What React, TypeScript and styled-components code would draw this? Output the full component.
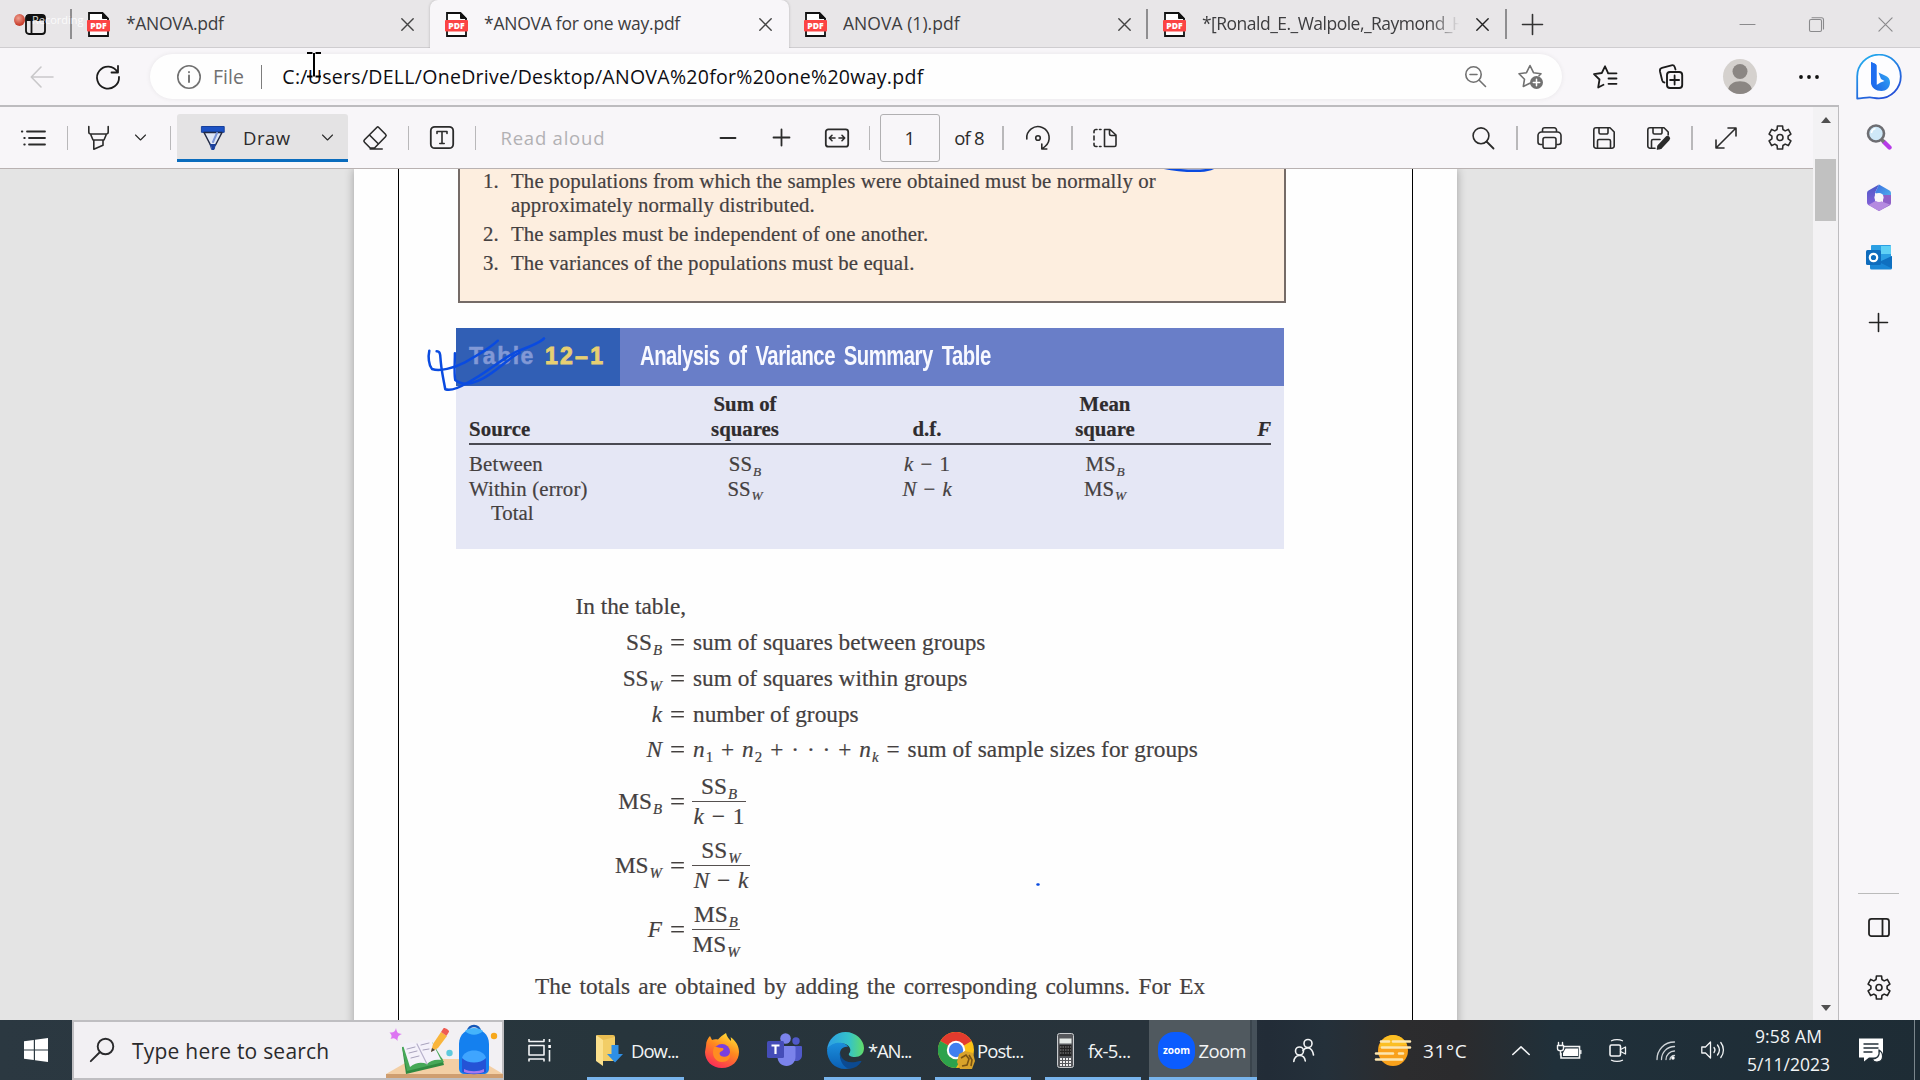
import React, { useLayoutEffect, useRef, useState } from 'react';
import styled, { createGlobalStyle } from 'styled-components';

const UI = `'Open Sans', 'Noto Sans', sans-serif`;
const BOOK = `'Liberation Serif', 'Times New Roman', serif`;

const Global = createGlobalStyle`
  * { box-sizing: border-box; }
  html, body { margin: 0; padding: 0; overflow: hidden; background: #f8f6f9; }
  body { font-family: ${UI}; }
`;

/* ---------- text that is set to a measure ---------- */

const FitSpan = styled.span`
  display: inline-block;
  white-space: pre;
  flex: none;
  justify-self: start;
`;

function Fit({ w, children, words }: { w: number; children: string; words?: boolean }) {
  const ref = useRef<HTMLSpanElement>(null);
  const [space, setSpace] = useState(0);
  useLayoutEffect(() => {
    if (!ref.current) return;
    const count = words ? children.split(' ').length - 1 : children.length - 1;
    const natural = ref.current.offsetWidth;
    if (count > 0) setSpace((w - natural) / count);
  }, []);
  return (
    <FitSpan ref={ref} style={words ? { wordSpacing: space } : { letterSpacing: space }}>
      {children}
    </FitSpan>
  );
}

/* ---------- shared pieces ---------- */

const Screen = styled.div`
  width: 1920px;
  height: 1080px;
  display: flex;
  flex-direction: column;
  background: #f8f6f9;
  overflow: hidden;
  position: relative;
`;

const Glyph = styled.svg<{ $ml?: number; $sw?: number }>`
  flex: none;
  display: block;
  overflow: visible;
  margin-left: ${(p) => p.$ml ?? 0}px;
  fill: none;
  stroke: currentColor;
  stroke-width: ${(p) => p.$sw ?? 1.6};
  stroke-linecap: round;
  stroke-linejoin: round;
`;

const Separator = styled.span<{ $ml?: number; $h?: number; $tone?: string }>`
  flex: none;
  width: 1.5px;
  height: ${(p) => p.$h ?? 24}px;
  margin-left: ${(p) => p.$ml ?? 0}px;
  margin-right: 0.5px;
  background: ${(p) => p.$tone ?? '#b9b8ba'};
`;

/* ---------- tab strip ---------- */

const TabStrip = styled.header`
  height: 48px;
  flex: none;
  display: flex;
  align-items: stretch;
  background: #e8e6e8;
  box-shadow: inset 0 -1px 0 #cfcdd0;
`;

const StripLead = styled.div`
  width: 72px;
  display: flex;
  align-items: center;
  color: #111;
  padding-left: 25px;
`;

const Tab = styled.div<{ $active?: boolean; $first?: boolean }>`
  width: ${(p) => (p.$first ? 358 : 359)}px;
  flex: none;
  display: flex;
  align-items: center;
  padding-left: 15px;
  border-radius: 8px 8px 0 0;
  background: ${(p) => (p.$active ? '#f8f6f9' : 'transparent')};
  box-shadow: ${(p) => (p.$active ? '0 0 3px rgba(0,0,0,.22)' : 'none')};
  clip-path: ${(p) => (p.$active ? 'inset(0 -4px 0 -4px)' : 'none')};
  color: #3d3d3f;
  font-size: 17.5px;
`;

const TabTitle = styled.div<{ $fade?: boolean }>`
  flex: 1;
  margin-left: 16px;
  margin-top: -2px;
  overflow: hidden;
  white-space: nowrap;
  mask-image: ${(p) => (p.$fade ? 'linear-gradient(90deg, #000 88%, transparent 99%)' : 'none')};
`;

const StripTools = styled.div`
  flex: 1;
  display: flex;
  align-items: center;
  color: #333;
`;

const FileBadge = () => (
  <Glyph width="23" height="25" viewBox="0 0 23 25">
    <path d="M2 1h13.5L21 6.5V24H2z" fill="#fff" stroke="#111" strokeWidth="1.8" strokeLinejoin="miter" />
    <path d="M15.5 1v5.500H21z" fill="#111" stroke="#111" strokeWidth="1" />
    <rect x="0" y="8" width="23" height="11.5" rx="1" fill="#fb4444" stroke="none" />
    <text x="11.5" y="16.9" textAnchor="middle" fontFamily="Open Sans, sans-serif" fontWeight="800" fontSize="8.6" fill="#fff" stroke="none">PDF</text>
  </Glyph>
);

const Cross = ({ ml, size = 13, tone = '#444', sw = 1.4 }: { ml?: number; size?: number; tone?: string; sw?: number }) => (
  <Glyph $ml={ml} $sw={sw} width={size} height={size} viewBox="0 0 13 13" color={tone}>
    <path d="M.8.8l11.4 11.4M12.2.8L.8 12.2" />
  </Glyph>
);

/* ---------- address row ---------- */

const Body = styled.div`
  height: 972px;
  flex: none;
  display: flex;
`;

const Main = styled.div`
  width: 1839px;
  flex: none;
  display: flex;
  flex-direction: column;
`;

const AddressRow = styled.div`
  height: 57px;
  flex: none;
  display: flex;
  align-items: center;
  color: #1b1b1b;
`;

const AddressBar = styled.div`
  width: 1412px;
  height: 45px;
  margin-left: 30px;
  flex: none;
  display: flex;
  align-items: center;
  border-radius: 23px;
  background: #fefefe;
  box-shadow: 0 0 5px rgba(0, 0, 0, 0.07);
  color: #717171;
  font-size: 19.5px;
`;

const Words = styled.span<{ $ml?: number; $tone?: string; $size?: number }>`
  flex: none;
  display: flex;
  line-height: 26px;
  margin-left: ${(p) => p.$ml ?? 0}px;
  color: ${(p) => p.$tone ?? 'inherit'};
  font-size: ${(p) => (p.$size ? `${p.$size}px` : 'inherit')};
`;

const Avatar = styled.div`
  width: 34px;
  height: 35px;
  margin-left: 40px;
  border-radius: 50%;
  background: #d5d1ce;
  overflow: hidden;
`;

/* ---------- PDF viewer ---------- */

const Frame = styled.div`
  flex: 1;
  display: flex;
  border-top: 2px solid #bdbcbf;
  border-right: 1.5px solid #bdbcbf;
`;

const Viewer = styled.div`
  width: 1813px;
  flex: none;
  display: flex;
  flex-direction: column;
`;

const PdfToolbar = styled.div`
  height: 62px;
  flex: none;
  display: flex;
  align-items: center;
  border-bottom: 1px solid #b9b2b2;
  color: #2b2b2b;
  font-size: 18.5px;
`;

const DrawButton = styled.div`
  width: 171px;
  height: 48px;
  margin-left: 5px;
  flex: none;
  display: flex;
  align-items: center;
  background: #e4e3e4;
  border-bottom: 3px solid #0a6cbd;
  border-radius: 3px 3px 0 0;
  padding: 3px 0 0 24px;
`;

const PageInput = styled.div`
  width: 60px;
  height: 48px;
  margin-left: 9px;
  flex: none;
  display: flex;
  align-items: center;
  justify-content: center;
  border: 1px solid #b1b0b2;
  border-radius: 3px;
`;

const Canvas = styled.div`
  height: 851px;
  overflow: hidden;
  background: #e4e4e4;
`;

const Page = styled.div`
  width: 1103px;
  height: 900px;
  margin-left: 354px;
  padding-left: 44px;
  background: #fefefe;
  box-shadow: 0 0 9px rgba(0, 0, 0, 0.3);
`;

const Sheet = styled.article`
  position: relative;
  width: 1015px;
  height: 100%;
  border-left: 1px solid #000;
  border-right: 1px solid #000;
  font-family: ${BOOK};
  color: #44403f;
  -webkit-text-stroke: 0.2px currentColor;
`;

const NoteBox = styled.section`
  width: 828px;
  height: 134px;
  margin-left: 59px;
  border: 2px solid #756b67;
  border-top: 0;
  background: #fdeedf;
  padding-left: 23px;
`;

const NoteItem = styled.div`
  display: grid;
  grid-template-columns: 28px 1fr;
  font-size: 20.8px;
  line-height: 24px;
  margin-bottom: 5.2px;
`;

const NoteLine = styled.div``;

const TableCard = styled.section`
  width: 828px;
  height: 221px;
  margin: 25px 0 0 57px;
  background: #e5e7f5;
`;

const TableBanner = styled.div`
  height: 58px;
  display: flex;
  background: #697ec8;
  font-family: 'Liberation Sans', Arial, sans-serif;
  font-weight: bold;
  line-height: 56px;
`;

const BannerTag = styled.div`
  width: 164px;
  padding-left: 13px;
  background: #315fb5;
  display: flex;
  font-size: 23px;
  color: #8299d6;
  -webkit-text-stroke: 0.5px currentColor;
`;

const BannerNumber = styled.span`
  margin-left: 10px;
  color: #e7cf72;
  -webkit-text-stroke: 0.9px currentColor;
`;

const BannerTitle = styled.div`
  padding-left: 20px;
  color: #f8f9ff;
  font-size: 27px;
  -webkit-text-stroke: 0;
`;

const Condensed = styled.span`
  display: inline-block;
  transform: scaleX(0.75);
  transform-origin: 0 50%;
  word-spacing: 5px;
`;

const TableGrid = styled.div<{ $head?: boolean }>`
  width: 802px;
  margin-left: 13px;
  display: grid;
  grid-template-columns: 186px 180px 184px 172px 80px;
  align-items: end;
  font-size: 20.8px;
  line-height: 25px;
  ${(p) =>
    p.$head
      ? `height: 59px; padding-bottom: 2px; border-bottom: 2px solid #4a4a52; font-weight: bold; color: #2f2c2e;`
      : `height: 24.7px;`}
`;

const Cell = styled.div<{ $align?: string; $indent?: number }>`
  text-align: ${(p) => p.$align ?? 'center'};
  padding-left: ${(p) => p.$indent ?? 0}px;
  white-space: pre;
`;

const TableRows = styled.div`
  padding-top: 6px;
`;

const Sub = styled.sub<{ $upright?: boolean }>`
  font-size: 0.64em;
  font-style: ${(p) => (p.$upright ? 'normal' : 'italic')};
  vertical-align: baseline;
  position: relative;
  top: 0.36em;
  margin-left: 1px;
  line-height: 0;
`;

const Expression = styled.span<{ $gap?: number }>`
  word-spacing: ${(p) => p.$gap ?? 2}px;
`;

const Prose = styled.div`
  margin-top: 39px;
  font-size: 23.3px;
`;

const Lead = styled.div`
  padding-left: 176.5px;
  height: 36px;
  line-height: 36px;
`;

const Definition = styled.div<{ $h?: number }>`
  display: grid;
  grid-template-columns: 263px 31px 1fr;
  height: ${(p) => p.$h ?? 36}px;
  line-height: 36px;
`;

const Left = styled.div`
  text-align: right;
`;

const Equals = styled.div`
  text-align: center;
  transform: scaleX(1.15);
`;

const Formula = styled(Definition)`
  height: 64px;
  align-items: center;
  & > ${Left}, & > ${Equals} {
    padding-bottom: 3px;
  }
`;

const FormulaGroup = styled.div`
  padding-top: 3px;
`;

const Fraction = styled.div<{ $w: number }>`
  width: ${(p) => p.$w}px;
  margin-left: -1px;
  text-align: center;
  white-space: nowrap;
  line-height: 28px;
`;

const Numerator = styled.div`
  height: 30px;
  border-bottom: 1.5px solid #55504f;
`;

const Denominator = styled.div`
  height: 30px;
  display: flex;
  justify-content: center;
`;

const Closing = styled.div`
  margin: 6px 0 0 136px;
  white-space: nowrap;
  line-height: 36px;
`;

const Ink = styled.svg<{ $x: number; $y: number }>`
  position: absolute;
  left: ${(p) => p.$x}px;
  top: ${(p) => p.$y}px;
  fill: none;
  stroke: #0a4be0;
  stroke-linecap: round;
  stroke-linejoin: round;
`;

const ScrollTrack = styled.div`
  flex: 1;
  display: flex;
  flex-direction: column;
  align-items: center;
  background: #f3f2f4;
`;

const Arrow = styled.span<{ $down?: boolean }>`
  width: 0;
  height: 0;
  border: 5.5px solid transparent;
  ${(p) =>
    p.$down
      ? 'border-top: 6px solid #505050; border-bottom: 0; margin: auto 0 9px;'
      : 'border-bottom: 6px solid #505050; border-top: 0; margin: 10px 0 36px;'}
`;

const Thumb = styled.span`
  width: 21px;
  height: 62px;
  background: #c1c1c1;
`;

/* ---------- sidebar ---------- */

const Sidebar = styled.aside`
  flex: 1;
  display: flex;
  flex-direction: column;
  align-items: center;
  color: #222;
  padding: 5px 2px 0 0;
`;

const SideSlot = styled.div<{ $mt: number; $h: number }>`
  height: ${(p) => p.$h}px;
  margin-top: ${(p) => p.$mt}px;
  display: flex;
  align-items: center;
`;

const SideRule = styled.hr`
  width: 41px;
  border: 0;
  height: 1px;
  background: #bbb;
  margin: 561px 0 0;
`;

/* ---------- taskbar ---------- */

const Taskbar = styled.footer`
  height: 60px;
  flex: none;
  display: flex;
  align-items: center;
  color: #f2f4f5;
  font-size: 18.5px;
  background: linear-gradient(90deg, #2b3841 0%, #27353c 32%, #28333b 60%, #222c37 66%, #24303a 69%, #2c2c2e 73%, #2b2b2d 76%, #20303a 81%, #1e2c35 100%);
  & ${Words} {
    padding-top: 2px;
  }
`;

const SearchBox = styled.div`
  width: 432px;
  height: 60px;
  margin-left: 24px;
  flex: none;
  display: flex;
  align-items: center;
  background: #f2f0f3;
  border: 2px solid #bfbec1;
  color: #2a2a2c;
`;

const AppButton = styled.div<{ $ml: number; $w: number; $pad: number; $current?: boolean }>`
  width: ${(p) => p.$w}px;
  height: 60px;
  margin-left: ${(p) => p.$ml}px;
  padding-left: ${(p) => p.$pad}px;
  flex: none;
  display: flex;
  align-items: center;
  border-bottom: 3px solid #78b4ec;
  padding-top: 3px;
  background: ${(p) =>
    p.$current ? 'linear-gradient(90deg, #50595f 0 101px, #3a444c 101px 103px, #46515a 103px)' : 'transparent'};
`;

const Clock = styled.div`
  width: 84px;
  margin-left: 23px;
  flex: none;
  text-align: center;
  line-height: 28.5px;
  font-size: 17.5px;
`;

/* ---------- overlays ---------- */

const Recording = styled.div`
  position: absolute;
  left: 14px;
  top: 13px;
  display: flex;
  align-items: center;
  gap: 7px;
  font-size: 11px;
  line-height: 14px;
  color: rgba(255, 255, 255, 0.85);
`;

const RecordDot = styled.span`
  width: 11px;
  height: 12px;
  border-radius: 50%;
  background: radial-gradient(circle at 40% 35%, #f0a090, #c8402f 65%);
`;

const Caret = styled.svg`
  position: absolute;
  left: 306px;
  top: 51px;
  stroke: #000;
  stroke-width: 2;
  fill: none;
`;

/* ---------- drawings ---------- */

const gearPath = (() => {
  const pts: string[] = [];
  for (let i = 0; i < 6; i++) {
    const mid = i * 60 - 90;
    for (const [off, r] of [[-21, 8.2], [-13, 11.4], [13, 11.4], [21, 8.2]]) {
      const a = ((mid + off) * Math.PI) / 180;
      pts.push(`${(12 + r * Math.cos(a)).toFixed(2)} ${(12.5 + r * 1.04 * Math.sin(a)).toFixed(2)}`);
    }
  }
  return `M${pts.join('L')}Z`;
})();

const Gear = ({ ml }: { ml?: number }) => (
  <Glyph $ml={ml} width="24" height="25" viewBox="0 0 24 25">
    <path d={gearPath} />
    <circle cx="12" cy="12.5" r="3" />
  </Glyph>
);

const Chevron = ({ ml }: { ml: number }) => (
  <Glyph $ml={ml} $sw={1.1} width="11" height="7" viewBox="0 0 11 7">
    <path d="M.5 1l5 5 5-5" />
  </Glyph>
);

const Bing = () => (
  <svg width="46" height="46" viewBox="0 0 46 46">
    <defs>
      <linearGradient id="bg1" x1="0" y1="0" x2=".6" y2="1">
        <stop offset="0" stopColor="#23b5f0" />
        <stop offset="1" stopColor="#2451d8" />
      </linearGradient>
      <linearGradient id="bg2" x1="0" y1="1" x2="1" y2="0">
        <stop offset="0" stopColor="#1b5fe0" />
        <stop offset=".55" stopColor="#2a8cf0" />
        <stop offset="1" stopColor="#35c8f0" />
      </linearGradient>
    </defs>
    <path d="M1.2 44.5V23A21.8 21.8 0 1 1 23 44.3c-4 0-6-.8-9-.9-4-.2-8 1-12.800 1.100z" fill="#fdfdff" stroke="url(#bg1)" strokeWidth="1.8" strokeLinejoin="round" />
    <path d="M15 8l4 1.800c1 .5 1.500 1.200 1.500 2.200V31l4 -2.500 4-1.500-3.500-2-2.500-6.500 6.500 3c3.500 1.500 5 3.500 5 7 0 5-4 8.500-8.500 8.500-5.500 0-10.500-3-10.500-9z" fill="url(#bg2)" />
    <path d="M15 8l4 1.800c1 .5 1.500 1.200 1.500 2.200V32c-3 1-5.500-1-5.500-4z" fill="#1d6df0" />
  </svg>
);

const Magnifier3D = () => (
  <svg width="26" height="26" viewBox="0 0 26 26">
    <path d="M18 18l5.500 5.500" stroke="#b73be8" strokeWidth="4.4" strokeLinecap="round" />
    <path d="M15.5 15.5l2.500 2.500" stroke="#777" strokeWidth="3.5" />
    <circle cx="10" cy="9.5" r="8" fill="#cfe8f8" stroke="#6d6d72" strokeWidth="2.6" />
    <path d="M5.5 9a5 5 0 0 1 4-4.500" stroke="#fff" strokeWidth="1.5" fill="none" />
  </svg>
);

const M365 = () => (
  <svg width="26" height="27" viewBox="0 0 26 27">
    <defs>
      <linearGradient id="m1" x1="0" y1="0" x2="0" y2="1"><stop offset="0" stopColor="#4a58c8" /><stop offset="1" stopColor="#8a62d8" /></linearGradient>
      <linearGradient id="m2" x1="0" y1="0" x2="1" y2="1"><stop offset="0" stopColor="#3a6be0" /><stop offset="1" stopColor="#52b8ee" /></linearGradient>
    </defs>
    <path d="M13 .5L2.500 6.500A3 3 0 0 0 1 9v9.500a3 3 0 0 0 1.500 2.600L8 24l1-5.500V9z" fill="url(#m1)" />
    <path d="M13 .5l10.500 6A3 3 0 0 1 25 9v7l-7.500-4.500L9 9z" fill="url(#m2)" />
    <path d="M25 11v8a3 3 0 0 1-1.500 2.600L13 27l-6-3.500L17 18v-7z" fill="#9060c8" />
    <path d="M2.500 21L12 15.500l5 2.500 7 2.500L14.500 26.200a3 3 0 0 1-3 0z" fill="#b58ae0" />
    <circle cx="13" cy="13.500" r="4.600" fill="#f8f6f9" />
  </svg>
);

const Outlook = () => (
  <svg width="26" height="25" viewBox="0 0 26 25">
    <rect x="5" y="0" width="20" height="16" rx="1" fill="#2b9fe3" />
    <rect x="15" y="1" width="10" height="8" fill="#5fd0f5" />
    <path d="M4 12l11 6 11-7v12a1.500 1.500 0 0 1-1.500 1.500h-19A1.500 1.500 0 0 1 4 23z" fill="#1a86d6" />
    <path d="M26 11v12.500L13 17z" fill="#0f6fc0" />
    <rect x="0" y="5" width="15" height="15" rx="1.500" fill="#0f6cbd" />
    <circle cx="7.500" cy="12.500" r="3.700" fill="none" stroke="#fff" strokeWidth="2.200" />
  </svg>
);

const DeskArt = () => (
  <Glyph $ml={57} width="117" height="56" viewBox="0 0 117 56">
    <g stroke="none">
      <path d="M0 52L26 37h66l25 15z" fill="#f3cfa5" />
      <path d="M0 52h117v4H0z" fill="#cf9e70" />
      <path d="M16 25l4 27 38-9-2-7z" fill="#2f8a40" />
      <path d="M16 25l30-5 12 20-37 9z" fill="#46a858" />
      <path d="M17 23c5-3 10-3 14-1 3-4 9-5 14-4l10 20c-6-1-11 1-14 4-5-2-11-2-17 3z" fill="#f4f1fa" />
      <path d="M31 22l10 20" stroke="#b9b2cc" strokeWidth="1.2" />
      <path d="M21 27l8-2M23 31l8-2M25 36l8-2M35 23l8-2M37 28l6-1" stroke="#a8a2bd" strokeWidth="1" />
      <path d="M45 30l2-8 8-12 6 4-9 12z" fill="#f9b53b" />
      <path d="M55 10l2.500-3.800c1-1 6 2 5.500 3.500l-2.500 4z" fill="#ef5b52" />
      <path d="M45 30l1-4 3 2z" fill="#444" />
      <path d="M10 6c1 5 2 5.500 6 6-4 1.500-4.500 3-4.500 7-2-3-4-3.500-7-2 2-3 1-4.500-1-6.500 4 .5 5.500-.5 6.500-4.500z" fill="#dd75f2" />
      <circle cx="63.5" cy="31" r="3.200" fill="#5ec9dd" />
      <circle cx="108" cy="14" r="3.200" fill="#f7a81c" />
      <path d="M82 10c0-8 12-8 12 0" stroke="#1557b8" strokeWidth="2.5" fill="none" />
      <path d="M73 22C73 2 103 2 103 22v24c0 4-2 6-6 6H79c-4 0-6-2-6-6z" fill="#1480ef" />
      <path d="M79 9c4-4 14-4 18 0-5 5-13 5-18 0z" fill="#45b4fb" />
      <path d="M76 50V38c0-12 24-12 24 0v12c-6 3-18 3-24 0z" fill="#2453d6" />
      <path d="M76 36c2-10 22-10 24 0-6 6-18 6-24 0z" fill="#3fa5ff" />
      <path d="M78 47c6 3 14 3 20 0v3c-6 2-14 2-20 0z" fill="#a678f0" />
    </g>
  </Glyph>
);

const Firefox = () => (
  <Glyph $ml={21} width="34" height="35" viewBox="0 0 34 35">
    <defs>
      <linearGradient id="ff" x1=".8" y1="0" x2=".3" y2="1"><stop offset="0" stopColor="#ffe73a" /><stop offset=".45" stopColor="#ff8a1f" /><stop offset="1" stopColor="#fb2a58" /></linearGradient>
    </defs>
    <g stroke="none">
      <path d="M1 13C1 8 3 5 5 3l2 4c2-1 4-1 6-.5C15 4 18 2 21 0c1 4 3 6 5 8 0-2 0-3-.5-4C31 8 34 13 34 19c0 9-7 16-17 16S0 28 0 19z" fill="url(#ff)" />
      <circle cx="17" cy="19" r="8" fill="#7a3fe0" />
      <path d="M9 14c3-1 4 1 8 1 2 0 2 2 0 3-3 1-3 3-1 5 4 2 8 0 9-3 1 6-3 9-8 9-7 0-11-7-8-15z" fill="#ff8c22" />
    </g>
  </Glyph>
);

const Teams = () => (
  <Glyph $ml={28} width="35" height="34" viewBox="0 0 35 34">
    <g stroke="none">
      <circle cx="29" cy="8" r="3.700" fill="#5059c9" />
      <circle cx="18.500" cy="5.500" r="5.300" fill="#7b83eb" />
      <path d="M24 13h10a1 1 0 0 1 1 1v8c0 4-3 6-6 6h-5z" fill="#5059c9" />
      <path d="M11 13h16a1.500 1.500 0 0 1 1.500 1.500V24c0 5-4 9-9 9s-9-4-9-9z" fill="#7b83eb" />
      <rect x="0" y="8" width="17" height="17" rx="1.500" fill="#454db8" />
      <path d="M4.500 12.500h8M8.500 12.500V21" stroke="#fff" strokeWidth="2.200" strokeLinecap="butt" />
    </g>
  </Glyph>
);

const Edge = () => (
  <svg width="37" height="37" viewBox="0 0 37 37">
    <defs>
      <linearGradient id="e1" x1="0" y1=".4" x2="1" y2=".4"><stop offset="0" stopColor="#2b9de6" /><stop offset=".6" stopColor="#35c3c8" /><stop offset="1" stopColor="#62dc68" /></linearGradient>
      <linearGradient id="e2" x1="0" y1="0" x2="0" y2="1"><stop offset="0" stopColor="#1b8fdc" /><stop offset="1" stopColor="#0b5fb4" /></linearGradient>
    </defs>
    <path d="M0 18C1 7 9 0 18.500 0 29 0 37 8 37 16c0 6-4 9-9 9-4 0-7-1.500-6-3.500 3-3 1-9-6-10C9 10.500 3 13 0 18z" fill="url(#e1)" />
    <path d="M0 18c3-6 9-8 15-7 3 .5 5 2 6 4-5-1-9 3-8 9 1 5 5 10 11 12-2 .7-4 1-6 1C8 37 0 29 0 18z" fill="url(#e2)" />
    <path d="M14.500 17c-4 7 3 17 18 12 1 0 2-.5 2 .5-3 4.500-7 7-11.500 7.200-8-1-12.500-12-8.500-19.700z" fill="#0c4a90" />
  </svg>
);

const Chrome = () => (
  <svg width="37" height="37" viewBox="0 0 37 37">
    <circle cx="18" cy="18" r="18" fill="#fbc116" />
    <path d="M18 18L2.400 9A18 18 0 0 1 33.600 9z" fill="#e33b2e" />
    <path d="M18 18L2.400 9A18 18 0 0 0 18 36l7.800-13.500z" fill="#2da24c" />
    <circle cx="18" cy="18" r="9.200" fill="#fff" />
    <circle cx="18" cy="18" r="7.200" fill="#3f7ff0" />
    <path d="M21 22l6-3 8 2 2 8-3 8H22l-3-7z" fill="#d9a32a" />
    <path d="M23 26l5-3 3 4-2 6-5 1M31 23l3 5-1 6" stroke="#7a5413" strokeWidth="1.600" fill="none" />
  </svg>
);

const Calculator = () => (
  <svg width="17" height="35" viewBox="0 0 17 35">
    <rect x=".5" y=".5" width="16" height="34" rx="2" fill="#56585c" stroke="#c9cccf" />
    <rect x="2.500" y="5.500" width="12" height="5" fill="#e6ebe8" />
    <rect x="2.500" y="12" width="12" height="11" fill="#222" />
    <path d="M3 14h11M3 17h11M3 20h11" stroke="#888" strokeDasharray="1.500 1" />
    <path d="M3 26h11M3 29h11M3 32h11" stroke="#eee" strokeWidth="2" strokeDasharray="2 1" />
  </svg>
);

const Folder = () => (
  <svg width="27" height="32" viewBox="0 0 27 32">
    <path d="M1 1h16a2 2 0 0 1 2 2v24H1z" fill="#e9bd52" />
    <path d="M0 1l7 5v26L0 27z" fill="#fbe08c" />
    <path d="M7 6l12-3v24H7z" fill="#f2cd66" />
    <path d="M15.500 11h7v9H27l-8 8.500L11 20h4.500z" fill="#2e8fe6" />
  </svg>
);

const TaskIcon = ({ ml, w, h, children }: { ml: number; w: number; h: number; children: React.ReactNode }) => (
  <Glyph $ml={ml} width={w} height={h} viewBox={`0 0 ${w} ${h}`}>{children}</Glyph>
);

/* ---------- sections ---------- */

const BrowserTabs = () => (
  <TabStrip>
    <StripLead>
      <Glyph $sw={1.8} width="21" height="21" viewBox="0 0 21 21">
        <rect x="1" y="1" width="19" height="19" rx="3" />
        <path d="M2 2h17v4H2z" fill="#111" />
        <path d="M6.5 5v15" />
      </Glyph>
      <Separator $ml={24} $h={30} $tone="#8f8e90" />
    </StripLead>
    <Tab $first>
      <FileBadge />
      <TabTitle><Fit w={98}>*ANOVA.pdf</Fit></TabTitle>
      <Cross />
      <Separator $ml={14} $tone="transparent" />
    </Tab>
    <Tab $active>
      <FileBadge />
      <TabTitle><Fit w={196}>*ANOVA for one way.pdf</Fit></TabTitle>
      <Cross />
      <Separator $ml={15} $tone="transparent" />
    </Tab>
    <Tab>
      <FileBadge />
      <TabTitle><Fit w={116.5}>ANOVA (1).pdf</Fit></TabTitle>
      <Cross />
      <Separator $ml={15} $h={30} $tone="#8f8e90" />
    </Tab>
    <Tab>
      <FileBadge />
      <TabTitle $fade><Fit w={263}>*[Ronald_E._Walpole,_Raymond_H</Fit></TabTitle>
      <Cross ml={14} tone="#222" />
      <Separator $ml={16} $h={30} $tone="#8f8e90" />
    </Tab>
    <StripTools>
      <Glyph $ml={15} width="21" height="21" viewBox="0 0 21 21"><path d="M10.5.5v20M.5 10.5h20" /></Glyph>
      <Glyph $ml={197} $sw={1.1} width="15" height="15" viewBox="0 0 15 15" color="#8a8a8c"><path d="M0 7.500h15" /></Glyph>
      <Glyph $ml={54} $sw={1.1} width="15" height="15" viewBox="0 0 15 15" color="#8a8a8c">
        <rect x=".5" y="2.500" width="12" height="12" rx="1.500" />
        <path d="M3 .7h9.500a2 2 0 0 1 2 2V12" />
      </Glyph>
      <Cross ml={54} size={15} tone="#8a8a8c" sw={1} />
    </StripTools>
  </TabStrip>
);

const Address = () => (
  <AddressRow>
    <Glyph $ml={30} width="24" height="22" viewBox="0 0 24 22" color="#c9c8ca"><path d="M23 11H1.500M11 1L1.300 11 11 21" /></Glyph>
    <Glyph $ml={42} width="24" height="24" viewBox="0 0 24 24"><path d="M21.500 7A11 11 0 1 0 23 12M22 1v6.500h-6.500" strokeWidth="1.800" /></Glyph>
    <AddressBar>
      <Glyph $ml={27} width="24" height="24" viewBox="0 0 24 24">
        <circle cx="12" cy="12" r="11.200" />
        <path d="M12 10.500v6.500M12 7v.3" strokeWidth="1.900" />
      </Glyph>
      <Words $ml={12}><Fit w={31}>File</Fit></Words>
      <Separator $ml={17} $tone="#7d7d7d" />
      <Words $ml={19.5} $tone="#0d0d12"><Fit w={641}>C:/Users/DELL/OneDrive/Desktop/ANOVA%20for%20one%20way.pdf</Fit></Words>
      <Glyph $ml={541.5} width="21" height="21" viewBox="0 0 21 21">
        <circle cx="8.500" cy="8.500" r="7.700" /><path d="M14 14l6.500 6.500M5 8.500h7" />
      </Glyph>
      <Glyph $ml={32} width="25" height="25" viewBox="0 0 25 25">
        <path d="M12.500 19.500l-.700-.3L5.300 22.500l1.200-7.300L1 9.800l7.500-1.100L12 1.500l3.500 7.200L23 9.800l-2 2" />
        <circle cx="18.500" cy="18.500" r="6.500" fill="#717171" stroke="none" />
        <path d="M18.500 15.300v6.400M15.300 18.500h6.400" stroke="#fff" strokeWidth="1.500" />
      </Glyph>
    </AddressBar>
    <Glyph $ml={31} $sw={1.8} width="24" height="24" viewBox="0 0 24 24">
      <path d="M15 7.800L12 1.300 8.800 8 1 9.200l5.500 5.300L5.200 22.500 10.500 19.800M15 8.300h8.500M15.500 13.500h8M15.500 18.800h8" />
    </Glyph>
    <Glyph $ml={42} width="24" height="25" viewBox="0 0 24 25">
      <path d="M5.500 18.500c-1.500 0-2-1-2.300-2L1 7.500C.6 5.500 1.500 4.300 3 3.900L12.500 1.300c1.500-.3 2.700.3 3.200 1.700l.8 2.500" strokeWidth="1.800" />
      <rect x="8" y="8" width="15.200" height="16" rx="3" strokeWidth="1.900" />
      <path d="M15.600 11.500v9M11.100 16h9" strokeWidth="1.800" />
    </Glyph>
    <Avatar>
      <svg width="34" height="35" viewBox="0 0 34 35"><circle cx="17" cy="12.500" r="7.500" fill="#8b8683" /><path d="M5 32c0-13 24-13 24 0v4H5z" fill="#8b8683" /></svg>
    </Avatar>
    <Glyph $ml={42} width="20" height="4" viewBox="0 0 20 4"><g fill="#111" stroke="none"><circle cx="2" cy="2" r="1.900" /><circle cx="10" cy="2" r="1.900" /><circle cx="18" cy="2" r="1.900" /></g></Glyph>
  </AddressRow>
);

const floppy = 'M3 .8h14L21.200 5v14a2.200 2.200 0 0 1-2.200 2.200H3A2.200 2.200 0 0 1 .8 19V3A2.200 2.200 0 0 1 3 .8zM6 1v4.500A1.500 1.500 0 0 0 7.500 7h6A1.500 1.500 0 0 0 15 5.500V1';

const Toolbar = () => (
  <PdfToolbar>
    <Glyph $ml={20.5} width="24" height="16" viewBox="0 0 24 16"><path d="M6 1.500h18M8 8h16M8 14.500h16M.8 1.500h.6M3.200 8h.6M3.200 14.500h.6" strokeWidth="1.800" /></Glyph>
    <Separator $ml={22} />
    <Glyph $ml={19} width="21" height="24" viewBox="0 0 21 24">
      <path d="M.8.500v5.500c0 1 .8 2 2 2h15.400c1.200 0 2-1 2-2V.5M2.500 8l2.500 6h11l2.500-6M5.800 14v9.200l9.200-4V14" />
    </Glyph>
    <Chevron ml={26} />
    <Separator $ml={24} />
    <DrawButton>
      <Glyph width="24" height="24" viewBox="0 0 24 24">
        <path d="M.8.500h22.400v5.800H.8z" fill="#1c52c4" stroke="#17409c" strokeWidth="1" />
        <path d="M3 6.500l6.500 12.500h5L21 6.500z" fill="#dfe6f5" stroke="#222a44" strokeWidth="1.500" />
        <path d="M16 7l-4 9" stroke="#7b95d8" strokeWidth="2" />
        <path d="M9.500 18.500h5l-1.500 5h-2z" fill="#1c3f9c" stroke="#17409c" strokeWidth="1" />
      </Glyph>
      <Words $ml={18.5}><Fit w={47.5}>Draw</Fit></Words>
      <Chevron ml={31} />
    </DrawButton>
    <Glyph $ml={15} width="24" height="24" viewBox="0 0 24 24">
      <path d="M15.500 1.200l7 7c.8.800.8 1.800 0 2.600L11.500 22H7.200L1.500 16.300c-.8-.8-.8-1.800 0-2.600L14 1.200c.5-.5 1-.5 1.500 0zM6.500 9l9 9M7.200 23h12" />
    </Glyph>
    <Separator $ml={21} />
    <Glyph $ml={20} width="24" height="23" viewBox="0 0 24 23">
      <rect x=".8" y=".8" width="22.400" height="21.400" rx="4" strokeWidth="1.800" />
      <path d="M7 7.500V5.500h10v2M12 5.500v12M9.800 17.500h4.400" />
    </Glyph>
    <Separator $ml={21} />
    <Words $ml={24} $tone="#b2b1b4"><Fit w={104}>Read aloud</Fit></Words>
    <Glyph $ml={114.5} width="16" height="16" viewBox="0 0 16 16"><path d="M.5 8h15" strokeWidth="1.800" /></Glyph>
    <Glyph $ml={37} width="17" height="17" viewBox="0 0 17 17"><path d="M.5 8.500h16M8.500.5v16" strokeWidth="1.800" /></Glyph>
    <Glyph $ml={35} width="24" height="18" viewBox="0 0 24 18">
      <rect x=".8" y=".3" width="22.400" height="17.400" rx="2.500" strokeWidth="1.800" />
      <path d="M10 9H4.500M7 6.300L4.300 9 7 11.700M14 9h5.500M17 6.300L19.700 9 17 11.700" />
    </Glyph>
    <Separator $ml={20} />
    <PageInput>1</PageInput>
    <Words $ml={14.5}><Fit w={30.5}>of 8</Fit></Words>
    <Separator $ml={18.5} />
    <Glyph $ml={22} width="24" height="24" viewBox="0 0 24 24">
      <path d="M.8 13A11.200 11.200 0 1 1 19 20.500l-2.500 2M15.800 18v5h5" />
      <circle cx="12" cy="12" r="2.300" />
    </Glyph>
    <Separator $ml={21} />
    <Glyph $ml={20} width="24" height="18" viewBox="0 0 24 18">
      <path d="M11.500.5h5.500l6 5.500v10a1.500 1.500 0 0 1-1.500 1.500h-10zM16.500.5V5a1.500 1.500 0 0 0 1.500 1.500h5" />
      <path d="M8 .5H6.500M4 .5H3A2 2 0 0 0 1 2.500v1.200M1 7v4M1 14.300v1.200a2 2 0 0 0 2 2h1M6.500 17.500H8" />
    </Glyph>
    <Glyph $ml={355} width="22" height="22" viewBox="0 0 22 22"><circle cx="9" cy="8.800" r="7.900" /><path d="M14.500 14.500l7 7" strokeWidth="1.800" /></Glyph>
    <Separator $ml={22} />
    <Glyph $ml={19} width="25" height="22" viewBox="0 0 25 22">
      <path d="M5 17.500H3.500A2.500 2.500 0 0 1 1 15V8.500A3.500 3.500 0 0 1 4.500 5h16A3.500 3.500 0 0 1 24 8.500V15a2.500 2.500 0 0 1-2.500 2.500H20M5.500 5V3A2.200 2.200 0 0 1 7.700.8h9.600A2.200 2.200 0 0 1 19.500 3v2" />
      <rect x="6" y="10.500" width="13" height="10.700" rx="2" />
    </Glyph>
    <Glyph $ml={31} width="22" height="22" viewBox="0 0 22 22">
      <path d={floppy} /><path d="M4.500 21v-7A1.500 1.500 0 0 1 6 12.500h10a1.500 1.500 0 0 1 1.500 1.500v7" />
    </Glyph>
    <Glyph $ml={32} width="23" height="22" viewBox="0 0 23 22">
      <path d="M8 21.200H3A2.200 2.200 0 0 1 .8 19V3A2.200 2.200 0 0 1 3 .8h14L21.200 5v3M6 1v4.500A1.500 1.500 0 0 0 7.500 7h6A1.500 1.500 0 0 0 15 5.500V1M4.500 21v-7A1.500 1.500 0 0 1 6 12.500h7" />
      <path d="M13 19.500l7.500-8" strokeWidth="5.200" /><path d="M10.500 22l1-3.500 2.500 2.500z" fill="currentColor" />
    </Glyph>
    <Separator $ml={21} />
    <Glyph $ml={22} width="22" height="22" viewBox="0 0 22 22"><path d="M1.500 20.500l19-19M13 1h8v8M9 21H1v-8" /></Glyph>
    <Gear ml={31} />
  </PdfToolbar>
);

const Document = () => (
  <Canvas>
    <Page>
      <Sheet>
        <NoteBox>
          <NoteItem>
            <span>1.</span>
            <div>
              <NoteLine><Fit w={645}>The populations from which the samples were obtained must be normally or</Fit></NoteLine>
              <NoteLine><Fit w={304}>approximately normally distributed.</Fit></NoteLine>
            </div>
          </NoteItem>
          <NoteItem><span>2.</span><Fit w={417}>The samples must be independent of one another.</Fit></NoteItem>
          <NoteItem><span>3.</span><Fit w={403}>The variances of the populations must be equal.</Fit></NoteItem>
        </NoteBox>

        <TableCard>
          <TableBanner>
            <BannerTag>
              <Fit w={64}>Table</Fit>
              <BannerNumber><Fit w={58}>12–1</Fit></BannerNumber>
            </BannerTag>
            <BannerTitle><Condensed><Fit w={468}>Analysis of Variance Summary Table</Fit></Condensed></BannerTitle>
          </TableBanner>
          <TableGrid $head>
            <Cell $align="left"><Fit w={61.5}>Source</Fit></Cell>
            <Cell>{'Sum of\nsquares'}</Cell>
            <Cell>d.f.</Cell>
            <Cell>{'Mean\nsquare'}</Cell>
            <Cell $align="right"><i>F</i></Cell>
          </TableGrid>
          <TableRows>
            <TableGrid>
              <Cell $align="left"><Fit w={74}>Between</Fit></Cell>
              <Cell>SS<Sub>B</Sub></Cell>
              <Cell><Expression><i>k</i> − 1</Expression></Cell>
              <Cell>MS<Sub>B</Sub></Cell>
            </TableGrid>
            <TableGrid>
              <Cell $align="left"><Fit w={118}>Within (error)</Fit></Cell>
              <Cell>SS<Sub>W</Sub></Cell>
              <Cell><Expression><i>N</i> − <i>k</i></Expression></Cell>
              <Cell>MS<Sub>W</Sub></Cell>
            </TableGrid>
            <TableGrid>
              <Cell $align="left" $indent={22}><Fit w={42}>Total</Fit></Cell>
            </TableGrid>
          </TableRows>
        </TableCard>

        <Prose>
          <Lead><Fit w={111}>In the table,</Fit></Lead>
          <Definition>
            <Left>SS<Sub>B</Sub></Left><Equals>=</Equals><div><Fit w={292}>sum of squares between groups</Fit></div>
          </Definition>
          <Definition $h={35.5}>
            <Left>SS<Sub>W</Sub></Left><Equals>=</Equals><div><Fit w={274}>sum of squares within groups</Fit></div>
          </Definition>
          <Definition $h={35.5}>
            <Left><i>k</i></Left><Equals>=</Equals><div><Fit w={166}>number of groups</Fit></div>
          </Definition>
          <Definition>
            <Left><i>N</i></Left><Equals>=</Equals>
            <div>
              <Expression $gap={2.1}>
                <i>n</i><Sub $upright>1</Sub>{' + '}<i>n</i><Sub $upright>2</Sub>{' + · · · + '}<i>n</i><Sub>k</Sub>{' = '}
              </Expression>
              <Fit w={290}>sum of sample sizes for groups</Fit>
            </div>
          </Definition>
          <FormulaGroup>
            <Formula>
              <Left>MS<Sub>B</Sub></Left><Equals>=</Equals>
              <Fraction $w={54}><Numerator>SS<Sub>B</Sub></Numerator><Denominator><Expression><i>k</i> − 1</Expression></Denominator></Fraction>
            </Formula>
            <Formula>
              <Left>MS<Sub>W</Sub></Left><Equals>=</Equals>
              <Fraction $w={58}><Numerator>SS<Sub>W</Sub></Numerator><Denominator><Expression><i>N</i> − <i>k</i></Expression></Denominator></Fraction>
            </Formula>
            <Formula>
              <Left><i>F</i></Left><Equals>=</Equals>
              <Fraction $w={48}><Numerator>MS<Sub>B</Sub></Numerator><Denominator><Expression>MS<Sub>W</Sub></Expression></Denominator></Fraction>
            </Formula>
          </FormulaGroup>
          <Closing><Fit w={670} words>The totals are obtained by adding the corresponding columns. For Ex</Fit></Closing>
        </Prose>

        <Ink $x={21} $y={151} width="133" height="80" viewBox="0 480 400 240" strokeWidth="7.500">
          <path d="M28 572C24 590 26 615 36 627C60 635 100 625 135 607C175 585 215 560 234 542" />
          <path d="M50 574C64 574 60 590 63 610C66 640 72 665 76 688C95 694 120 682 140 670C200 640 240 600 290 575C330 560 365 545 373 535" />
          <path d="M105 580C105 610 102 640 106 660C130 680 160 670 190 655C230 635 265 595 300 578" />
        </Ink>
        <Ink $x={761} $y={0} width="56" height="5" viewBox="0 0 56 5" strokeWidth="2.500">
          <path d="M1-2C12 1 28 2 40 1.800C48 1.500 52 0 55-2" />
        </Ink>
        <Ink $x={637} $y={714} width="4" height="3" viewBox="0 0 4 3" strokeWidth="2.400">
          <path d="M1.500 1.500h1" />
        </Ink>
      </Sheet>
    </Page>
  </Canvas>
);

const EdgeSidebar = () => (
  <Sidebar>
    <SideSlot $mt={1} $h={46}><Bing /></SideSlot>
    <SideSlot $mt={24} $h={26}><Magnifier3D /></SideSlot>
    <SideSlot $mt={34} $h={27}><M365 /></SideSlot>
    <SideSlot $mt={34} $h={25}><Outlook /></SideSlot>
    <SideSlot $mt={43} $h={19}>
      <Glyph width="19" height="19" viewBox="0 0 19 19"><path d="M9.500.5v18M.5 9.500h18" /></Glyph>
    </SideSlot>
    <SideRule />
    <SideSlot $mt={24} $h={19}>
      <Glyph $sw={1.8} width="22" height="19" viewBox="0 0 22 19"><rect x="1" y=".8" width="20" height="17.400" rx="2.500" /><path d="M14.500 1v17" /></Glyph>
    </SideSlot>
    <SideSlot $mt={37} $h={26}><Gear /></SideSlot>
  </Sidebar>
);

const WindowsTaskbar = () => (
  <Taskbar>
    <Glyph $ml={24} width="24" height="24" viewBox="0 0 24 24"><g fill="#fff" stroke="none"><path d="M0 3.300L9.800 2v9.500H0zM11 1.800L24 0v11.500H11zM0 12.600h9.800v9.500L0 20.800zM11 12.600h13V24l-13-1.800z" /></g></Glyph>
    <SearchBox>
      <Glyph $ml={16} width="24" height="24" viewBox="0 0 24 24"><circle cx="15.500" cy="8.500" r="7.800" strokeWidth="1.900" /><path d="M10 14L.8 23.200" strokeWidth="1.900" /></Glyph>
      <Words $ml={18} $size={21}><Fit w={197}>Type here to search</Fit></Words>
      <DeskArt />
    </SearchBox>
    <TaskIcon ml={24} w={24} h={24}>
      <path d="M1 7.500h15v9.500H1zM1 1v2.500h15V1M1 23.500V21h15v2.500M21.500 1v3M21.500 12v11.500" strokeLinecap="butt" />
      <path d="M20.300 7h2.600v3h-2.600z" fill="#fff" stroke="none" />
    </TaskIcon>
    <AppButton $ml={35} $w={97} $pad={9}><Folder /><Words $ml={8}><Fit w={48}>Dow...</Fit></Words></AppButton>
    <Firefox />
    <Teams />
    <AppButton $ml={22} $w={97} $pad={3}><Edge /><Words $ml={4}><Fit w={44}>*AN...</Fit></Words></AppButton>
    <AppButton $ml={14} $w={96} $pad={3}><Chrome /><Words $ml={2}><Fit w={47}>Post...</Fit></Words></AppButton>
    <AppButton $ml={14} $w={96} $pad={12}><Calculator /><Words $ml={14}><Fit w={43}>fx-5...</Fit></Words></AppButton>
    <AppButton $ml={8} $w={108} $pad={8.5} $current>
      <svg width="37" height="37" viewBox="0 0 37 37">
        <rect x="0" y="0" width="37" height="37" rx="16" fill="#0b5cff" />
        <text x="18.500" y="21.500" textAnchor="middle" fontFamily="Open Sans, sans-serif" fontWeight="700" fontSize="10" fill="#fff">zoom</text>
      </svg>
      <Words $ml={4}><Fit w={48}>Zoom</Fit></Words>
    </AppButton>
    <TaskIcon ml={36} w={22} h={24}>
      <circle cx="15" cy="5.500" r="4" /><path d="M10 12.500c3-4 9-4 10.500 4.500M7 10.500" />
      <circle cx="6.500" cy="13" r="4" /><path d="M.8 23.500c1-8 10.500-8 11.500-.5" />
    </TaskIcon>
    <Glyph $ml={60} width="36" height="31" viewBox="0 0 36 31">
      <ellipse cx="18" cy="15.500" rx="15" ry="15.500" fill="#f9a11b" stroke="none" />
      <path d="M4 13C6 3 13 0 18 0c6 0 12 4 14 10z" fill="#fbbf24" stroke="none" />
      <path d="M6 6.500h8M18 6.500h17M7 12.500h28M1 18.500h17M24 18.500h4M1 24.500h26" stroke="#fde6b0" strokeWidth="2.600" />
    </Glyph>
    <Words $ml={12} $size={19}><Fit w={44}>31°C</Fit></Words>
    <TaskIcon ml={44} w={18} h={9}><path d="M.8 8.500L9 .8l8.200 7.700" /></TaskIcon>
    <TaskIcon ml={27} w={24} h={17}>
      <path d="M7 4.500h15.500v11.500H4v-4.500" strokeLinejoin="miter" /><path d="M8.500 6.500H21V14H6v-3z" fill="#fff" stroke="none" />
      <path d="M1.500.5v3M5.500.5v3M.5 3.500h6v3c0 3-6 3-6 0zM3.500 9v4M23.800 8.500v3" strokeWidth="1.400" />
    </TaskIcon>
    <TaskIcon ml={28} w={18} h={23}>
      <rect x="1" y="6" width="10.500" height="11" rx="1.500" /><path d="M11.500 10.500l5-2.500v7l-5-2.500M2.500 1.800c3-1.600 8-1.600 11 0M2.500 21.200c3 1.600 8 1.600 11 0" strokeWidth="1.300" />
    </TaskIcon>
    <TaskIcon ml={29} w={19} h={19}>
      <path d="M1 18.500C1 9 8 1 18.500 1M5.500 18.500C5.500 11.500 11 5.500 18.500 5.500M10 18.500c0-4.500 4-8.500 8.500-8.500M14 18.500c0-2 2-4 4.500-4" strokeWidth="1.300" stroke="#cfd4d8" />
      <circle cx="17" cy="17" r="1.700" fill="#fff" stroke="none" />
    </TaskIcon>
    <TaskIcon ml={26} w={23} h={18}>
      <path d="M.8 6v6h3.700l5 5V1l-5 5zM13 6.500c1.200 1.500 1.200 3.500 0 5M16.500 4c2.300 3 2.300 7 0 10M19.800 1.500c3.500 4.500 3.500 10.500 0 15" strokeWidth="1.300" />
    </TaskIcon>
    <Clock>
      <Fit w={67}>9:58 AM</Fit>
      <Fit w={83}>5/11/2023</Fit>
    </Clock>
    <TaskIcon ml={28} w={25} h={25}>
      <path d="M0 .5h24v19H10l-5 4v-4H0z" fill="#fff" stroke="none" />
      <path d="M5 6h14M5 10h14M5 14h8" stroke="#24313a" strokeWidth="1.400" />
      <path d="M20 12c5 3 5 11-1 12-3 .5-5-1-6-3 5 0 8-3 7-9z" fill="#fff" stroke="#24313a" strokeWidth="1.300" />
    </TaskIcon>
    <Separator $ml={30} $h={60} $tone="#7b868c" />
  </Taskbar>
);

export default function App() {
  return (
    <Screen>
      <Global />
      <BrowserTabs />
      <Body>
        <Main>
          <Address />
          <Frame>
            <Viewer>
              <Toolbar />
              <Document />
            </Viewer>
            <ScrollTrack>
              <Arrow />
              <Thumb />
              <Arrow $down />
            </ScrollTrack>
          </Frame>
        </Main>
        <EdgeSidebar />
      </Body>
      <WindowsTaskbar />
      <Recording><RecordDot /><Fit w={52}>Recording</Fit></Recording>
      <Caret width="16" height="27" viewBox="0 0 16 27"><path d="M1 2h5.500M9.500 2H15M1 25.500h5.500M9.500 25.500H15M8 2v23.500" /></Caret>
    </Screen>
  );
}
